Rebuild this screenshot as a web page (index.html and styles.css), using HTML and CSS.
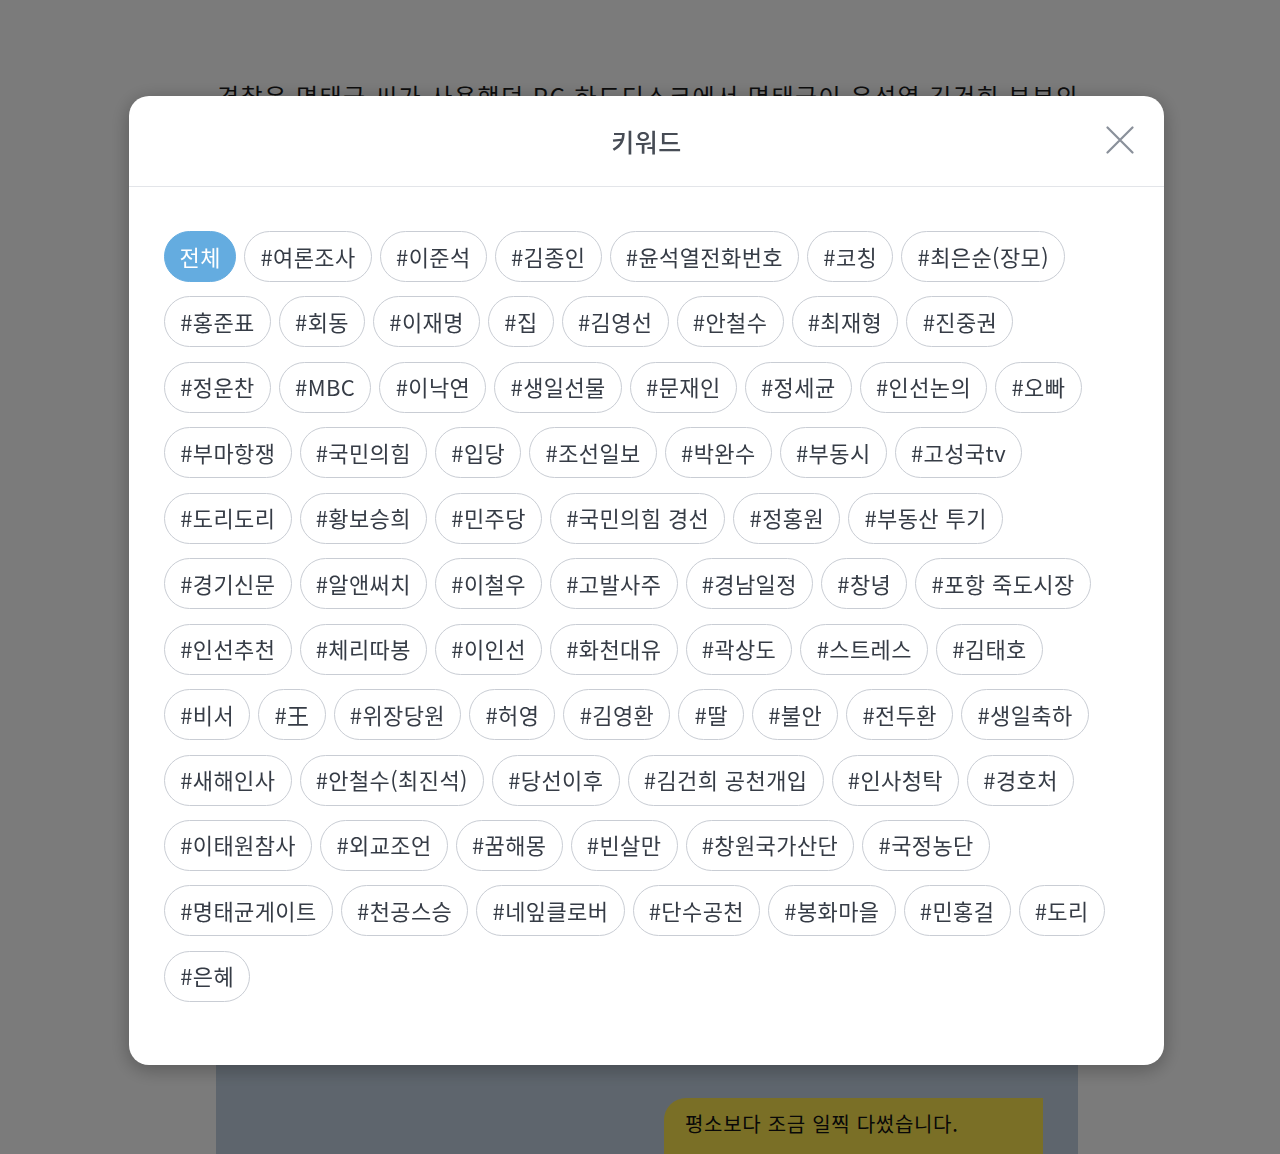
FILE: index.html
```html
<!DOCTYPE html>
<html lang="ko">
<head>
<meta charset="utf-8">
<title>키워드</title>
<link rel="stylesheet" href="styles.css">
</head>
<body>
<div class="page">
  <article class="article">
    <p class="article-text">경찰은 명태균 씨가 사용했던 PC 하드디스크에서 명태균이 윤석열 김건희 부부의</p>
    <div class="chat">
      <div class="bubble">평소보다 조금 일찍 다썼습니다.</div>
    </div>
  </article>
</div>

<div class="overlay">
  <div class="modal" role="dialog" aria-label="키워드">
    <header class="modal-header">
      <h2 class="modal-title">키워드</h2>
      <button class="close" aria-label="닫기">
        <svg width="28" height="28" viewBox="0 0 28 28" fill="none" stroke="#8a909a" stroke-width="2.2" stroke-linecap="round"><path d="M1.5 1.5 L26.5 26.5 M26.5 1.5 L1.5 26.5"/></svg>
      </button>
    </header>
    <div class="modal-body">
      <div class="row">
        <span class="chip active">전체</span><span class="chip">#여론조사</span><span class="chip">#이준석</span><span class="chip">#김종인</span><span class="chip">#윤석열전화번호</span><span class="chip">#코칭</span><span class="chip">#최은순(장모)</span>
      </div>
      <div class="row">
        <span class="chip">#홍준표</span><span class="chip">#회동</span><span class="chip">#이재명</span><span class="chip">#집</span><span class="chip">#김영선</span><span class="chip">#안철수</span><span class="chip">#최재형</span><span class="chip">#진중권</span>
      </div>
      <div class="row">
        <span class="chip">#정운찬</span><span class="chip">#MBC</span><span class="chip">#이낙연</span><span class="chip">#생일선물</span><span class="chip">#문재인</span><span class="chip">#정세균</span><span class="chip">#인선논의</span><span class="chip">#오빠</span>
      </div>
      <div class="row">
        <span class="chip">#부마항쟁</span><span class="chip">#국민의힘</span><span class="chip">#입당</span><span class="chip">#조선일보</span><span class="chip">#박완수</span><span class="chip">#부동시</span><span class="chip">#고성국tv</span>
      </div>
      <div class="row">
        <span class="chip">#도리도리</span><span class="chip">#황보승희</span><span class="chip">#민주당</span><span class="chip">#국민의힘 경선</span><span class="chip">#정홍원</span><span class="chip">#부동산 투기</span>
      </div>
      <div class="row">
        <span class="chip">#경기신문</span><span class="chip">#알앤써치</span><span class="chip">#이철우</span><span class="chip">#고발사주</span><span class="chip">#경남일정</span><span class="chip">#창녕</span><span class="chip">#포항 죽도시장</span>
      </div>
      <div class="row">
        <span class="chip">#인선추천</span><span class="chip">#체리따봉</span><span class="chip">#이인선</span><span class="chip">#화천대유</span><span class="chip">#곽상도</span><span class="chip">#스트레스</span><span class="chip">#김태호</span>
      </div>
      <div class="row">
        <span class="chip">#비서</span><span class="chip">#王</span><span class="chip">#위장당원</span><span class="chip">#허영</span><span class="chip">#김영환</span><span class="chip">#딸</span><span class="chip">#불안</span><span class="chip">#전두환</span><span class="chip">#생일축하</span>
      </div>
      <div class="row">
        <span class="chip">#새해인사</span><span class="chip">#안철수(최진석)</span><span class="chip">#당선이후</span><span class="chip">#김건희 공천개입</span><span class="chip">#인사청탁</span><span class="chip">#경호처</span>
      </div>
      <div class="row">
        <span class="chip">#이태원참사</span><span class="chip">#외교조언</span><span class="chip">#꿈해몽</span><span class="chip">#빈살만</span><span class="chip">#창원국가산단</span><span class="chip">#국정농단</span>
      </div>
      <div class="row">
        <span class="chip">#명태균게이트</span><span class="chip">#천공스승</span><span class="chip">#네잎클로버</span><span class="chip">#단수공천</span><span class="chip">#봉화마을</span><span class="chip">#민홍걸</span><span class="chip">#도리</span>
      </div>
      <div class="row">
        <span class="chip">#은혜</span>
      </div>
    </div>
  </div>
</div>
</body>
</html>
```
FILE: styles.css
```css
html, body {
  margin: 0;
  padding: 0;
  background: #ffffff;
  font-family: "Noto Sans CJK KR", "Noto Sans", sans-serif;
  height: 1154px;
  overflow: hidden;
}

.page {
  height: 1154px;
}

.article {
  width: 862px;
  margin-left: 216px;
  height: 1154px;
  display: flex;
  flex-direction: column;
}

.article-text {
  margin: 78px 0 0 1px;
  font-size: 24px;
  line-height: 36px;
  color: #1c1c1c;
  white-space: nowrap;
  letter-spacing: 1.5px;
}

.chat {
  margin-top: auto;
  height: 560px;
  background: #c3d2e2;
  display: flex;
  flex-direction: column;
  justify-content: flex-end;
  align-items: flex-end;
  padding-right: 35px;
}

.bubble {
  box-sizing: border-box;
  width: 379px;
  height: 56px;
  background: #fde64f;
  border-radius: 22px 0 0 0;
  padding: 11px 21px 0;
  font-size: 20px;
  line-height: 30px;
  color: #111;
  letter-spacing: 0.7px;
}

.overlay {
  position: fixed;
  inset: 0;
  background: rgba(0, 0, 0, 0.518);
  padding: 96px 0 0 129px;
}

.modal {
  width: 1035px;
  height: 969px;
  background: #ffffff;
  border-radius: 20px;
  box-shadow: 0 4px 20px rgba(0, 0, 0, 0.3);
  display: flex;
  flex-direction: column;
}

.modal-header {
  height: 90px;
  border-bottom: 1px solid #e3e5e9;
  display: flex;
  align-items: center;
  justify-content: center;
  position: relative;
}

.modal-title {
  margin: 0;
  font-size: 25px;
  font-weight: 500;
  color: #474c55;
  letter-spacing: 0.5px;
}

.close {
  position: absolute;
  right: 30px;
  top: 30px;
  width: 28px;
  height: 28px;
  padding: 0;
  border: 0;
  background: none;
  display: flex;
}

.modal-body {
  padding: 44px 35px 0;
  display: flex;
  flex-direction: column;
  gap: 14.45px;
}

.row {
  display: flex;
  gap: 8px;
}

.chip {
  height: 51px;
  box-sizing: border-box;
  border: 1px solid #c9cdd4;
  border-radius: 26px;
  padding: 0 15.2px 2px;
  display: flex;
  align-items: center;
  font-size: 22px;
  color: #363c46;
  white-space: nowrap;
  letter-spacing: 0.4px;
}

.chip.active {
  padding: 0 14.5px 2px;
  background: #64ace0;
  border-color: #64ace0;
  color: #ffffff;
}
```
